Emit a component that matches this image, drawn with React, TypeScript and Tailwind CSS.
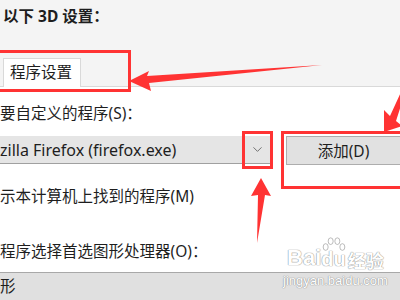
import { ChevronDown } from "lucide-react"

const font = "font-['Noto_Sans','Noto_Sans_CJK_SC',sans-serif]"

function Watermark() {
    return (
        <div className="absolute left-[283px] top-[247px] flex flex-col items-center text-white [text-shadow:0_0_1px_#8a8a8a,0_0_1px_#8a8a8a]">
            <div className="flex items-end leading-none">
                <span className="text-[22px] font-bold font-['Liberation_Sans',sans-serif]">Bai</span>
                <span className="relative text-[20px] font-bold font-['Liberation_Sans',sans-serif]">
                    <svg viewBox="0 0 30 24" className="absolute -top-[12px] left-0 w-[26px] h-[20px]" fill="#fff" stroke="#9a9a9a" strokeWidth="0.8">
                        <ellipse cx="5" cy="12" rx="3" ry="4" />
                        <ellipse cx="11" cy="5" rx="3" ry="4" />
                        <ellipse cx="19" cy="5" rx="3" ry="4" />
                        <ellipse cx="25" cy="12" rx="3" ry="4" />
                    </svg>
                    du
                </span>
                <span className="ml-[2px] text-[18px] font-bold font-['Noto_Sans_CJK_SC',sans-serif]">经验</span>
            </div>
            <span className="mt-[5px] text-[13px] leading-none font-['Liberation_Sans',sans-serif]">jingyan.baidu.com</span>
        </div>
    )
}

function Annotations() {
    return (
        <>
            <div className="absolute left-[-3px] top-[50px] w-[134px] h-[42px] border-[3px] border-[#ff3333]" />
            <div className="absolute left-[242px] top-[131px] w-[31px] h-[38px] border-[3px] border-[#ff3333]" />
            <div className="absolute left-[281px] top-[131px] w-[124px] h-[58px] border-[3px] border-[#ff3333]" />
            <svg className="absolute left-0 top-0 w-[400px] h-[300px] pointer-events-none" viewBox="0 0 400 300">
                <polygon fill="#ff3333" points="129,81 149,71 147,76 322,65 149,83 151,91" />
                <polygon fill="#ff3333" points="384,132 384,110 390,116 402,90 404,96 396,121 402,126" />
                <polygon fill="#ff3333" points="261,178 271,196 265,195 257,243 258,195 251,196" />
            </svg>
        </>
    )
}

export default function App() {
    return (
        <div className={`relative w-[400px] h-[300px] overflow-hidden flex flex-col bg-white text-[15.5px] text-[#1e1e1e] ${font}`}>
            <div className="h-[87px] flex flex-col bg-[#f4f4f4] border-b border-[#d9d9d9]">
                <div className="pt-[6px] pl-[3px] font-bold leading-[20px]">以下 3D 设置：</div>
                <div className="mt-auto -mb-px flex">
                    <div className="w-[3px] border-b border-[#d9d9d9]" />
                    <div className="w-[78px] h-[29px] bg-white border-t border-r border-l border-[#d9d9d9] pl-[6px] leading-[27px]">
                        程序设置
                    </div>
                </div>
            </div>

            <div className="flex-1 flex flex-col">
                <div className="mt-[16px] leading-[20px]">要自定义的程序(S)：</div>
                <div className="mt-[13px] flex gap-[16px]">
                    <div className="w-[270px] h-[28px] flex items-center bg-[#e5e5e5] border-b border-[#a0a0a0]">
                        <span className="flex-1 text-[16px] leading-[20px]">zilla Firefox (firefox.exe)</span>
                        <ChevronDown className="mr-[5px] w-[15px] h-[15px] text-[#6a6a6a]" strokeWidth={1.5} />
                    </div>
                    <div className="flex-1 h-[29px] flex items-center justify-center bg-[#e1e1e1] border border-r-0 border-[#adadad] leading-[20px]">
                        添加(D)
                    </div>
                </div>
                <div className="mt-[21px] leading-[20px]">示本计算机上找到的程序(M)</div>
                <div className="mt-[35px] leading-[20px]">程序选择首选图形处理器(O)：</div>
                <div className="mt-auto h-[28px] bg-[#e0e0e0] border-t border-[#a8a8a8] pt-[3px] leading-[20px]">形</div>
            </div>

            <Watermark />
            <Annotations />
        </div>
    )
}
